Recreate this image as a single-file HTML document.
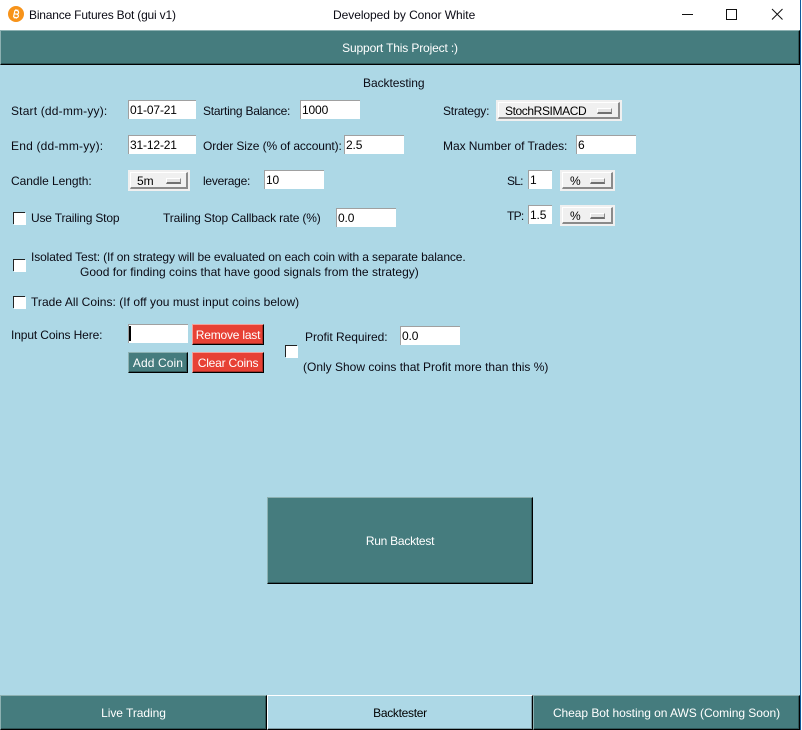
<!DOCTYPE html>
<html><head><meta charset="utf-8"><style>
html,body{margin:0;padding:0;background:#fff}
body{width:802px;height:730px;position:relative;overflow:hidden;font:12px/16px "Liberation Sans",sans-serif;color:#000}
div,svg{position:absolute}
.t{white-space:nowrap;height:16px;color:#0a0a14}
.b{background:#457c7e;box-sizing:border-box;border-style:solid;border-width:1px;border-color:#8db1b2 #000 #000 #8db1b2;box-shadow:inset -1px -1px 0 #2e5557;color:#fff;text-align:center;white-space:nowrap}
.e{background:#fff;box-sizing:border-box;border-style:solid;border-width:1px 0 0 1px;border-color:#a0a0a0;height:19px;padding-left:1px;line-height:18px;color:#000;white-space:nowrap;letter-spacing:-.15px}
.cb{width:12px;height:12px;box-sizing:border-box;background:#fff;border-style:solid;border-width:1px 0 0 1px;border-color:#222;box-shadow:1px 1px 0 #fff}
.m{background:#f0f0f0;height:21px;box-sizing:border-box;border:2px solid #f0f0f0}
.m i{position:absolute;left:0;top:0;right:0;bottom:0;border-style:solid;border-width:1px 2px 2px 1px;border-color:#fff #8a8a8a #8a8a8a #fff;box-sizing:border-box}
.m b{position:absolute;font-weight:normal;top:1px;line-height:17px;white-space:nowrap}
.m u{position:absolute;top:6px;width:15px;height:6px;box-sizing:border-box;border-style:solid;border-width:1px 1px 2px 1px;border-color:#fff #8a8a8a #707070 #fff;background:#e4e4e4}
.r{background:#e74135;box-sizing:border-box;border-style:solid;border-width:1px;border-color:#f4a09a #000 #000 #f4a09a;box-shadow:inset -1px -1px 0 #a82e26;color:#fff;text-align:center;white-space:nowrap;letter-spacing:-.2px}
</style></head><body>
<div style="left:0;top:0;width:800px;height:30px;background:#fff"></div>
<div style="left:800px;top:0;width:1px;height:730px;background:#0f5a9e"></div>
<div style="left:0;top:30px;width:800px;height:700px;background:#add8e6"></div>

<svg style="left:8px;top:6px" width="16" height="16" viewBox="0 0 16 16"><circle cx="8" cy="8" r="8" fill="#f7931a"/><g transform="rotate(12 8 8)"><path d="M6.200 4.500v7M6.200 4.500h2.300a1.700 1.700 0 0 1 0 3.500H6.200m0 0h2.800a1.750 1.750 0 0 1 0 3.500H6.200M7.200 3.300v1.200M9 3.300v1.200M7.200 11.500v1.200M9 11.500v1.200" fill="none" stroke="#fff" stroke-width="1.200"/></g></svg>
<div class="t" style="left:29px;top:7px;letter-spacing:-.19px">Binance Futures Bot (gui v1)</div>
<div class="t" style="left:333px;top:7px;letter-spacing:-.05px">Developed by Conor White</div>
<svg style="left:680px;top:6px" width="110" height="18" viewBox="0 0 110 18"><path d="M2 8.500H13" stroke="#111" fill="none"/><path d="M46.500 3.500h10v10h-10z" stroke="#111" fill="none"/><path d="M92 3l10.500 10.500M102.500 3L92 13.500" stroke="#111" fill="none"/></svg>

<div class="b" style="left:0;top:30px;width:800px;height:35px;line-height:34px;letter-spacing:-.15px">Support This Project :)</div>

<div class="t" style="left:363px;top:75px;letter-spacing:-.05px">Backtesting</div>

<div class="t" style="left:11px;top:103px;letter-spacing:.18px">Start (dd-mm-yy):</div>
<div class="e" style="left:128px;top:100px;width:68px">01-07-21</div>
<div class="t" style="left:203px;top:103px;letter-spacing:-.25px">Starting Balance:</div>
<div class="e" style="left:300px;top:100px;width:60px">1000</div>
<div class="t" style="left:443px;top:103px;letter-spacing:-.2px">Strategy:</div>
<div class="m" style="left:496px;top:100px;width:126px"><i></i><b style="left:7px;letter-spacing:-.4px">StochRSIMACD</b><u style="left:99px"></u></div>

<div class="t" style="left:11px;top:138px;letter-spacing:.2px">End (dd-mm-yy):</div>
<div class="e" style="left:128px;top:135px;width:68px">31-12-21</div>
<div class="t" style="left:203px;top:138px;letter-spacing:-.1px">Order Size (% of account):</div>
<div class="e" style="left:344px;top:135px;width:60px">2.5</div>
<div class="t" style="left:443px;top:138px;letter-spacing:-.05px">Max Number of Trades:</div>
<div class="e" style="left:576px;top:135px;width:60px">6</div>

<div class="t" style="left:11px;top:173px;letter-spacing:-.05px">Candle Length:</div>
<div class="m" style="left:128px;top:170px;width:62px"><i></i><b style="left:7px">5m</b><u style="left:36px"></u></div>
<div class="t" style="left:203px;top:173px;letter-spacing:-.25px">leverage:</div>
<div class="e" style="left:264px;top:170px;width:60px">10</div>
<div class="t" style="left:507px;top:173px;letter-spacing:-.8px">SL:</div>
<div class="e" style="left:528px;top:170px;width:24px">1</div>
<div class="m" style="left:560px;top:170px;width:55px"><i></i><b style="left:8px">%</b><u style="left:28px"></u></div>

<div class="cb" style="left:13px;top:212px"></div>
<div class="t" style="left:31px;top:210px;letter-spacing:-.18px">Use Trailing Stop</div>
<div class="t" style="left:163px;top:210px;letter-spacing:-.15px">Trailing Stop Callback rate (%)</div>
<div class="e" style="left:336px;top:208px;width:60px">0.0</div>
<div class="t" style="left:507px;top:208px;letter-spacing:-.7px">TP:</div>
<div class="e" style="left:528px;top:205px;width:24px">1.5</div>
<div class="m" style="left:560px;top:205px;width:55px"><i></i><b style="left:8px">%</b><u style="left:28px"></u></div>

<div class="cb" style="left:13px;top:259px"></div>
<div class="t" style="left:31px;top:249px;letter-spacing:-.11px">Isolated Test: (If on strategy will be evaluated on each coin with a separate balance.</div>
<div class="t" style="left:80px;top:264px;letter-spacing:.02px">Good for finding coins that have good signals from the strategy)</div>

<div class="cb" style="left:13px;top:296px"></div>
<div class="t" style="left:31px;top:294px;letter-spacing:.04px">Trade All Coins: (If off you must input coins below)</div>

<div class="t" style="left:11px;top:327px;letter-spacing:-.12px">Input Coins Here:</div>
<div class="e" style="left:128px;top:324px;width:60px"></div>
<div style="left:129px;top:326px;width:2px;height:15px;background:#000"></div>
<div class="r" style="left:192px;top:324px;width:72px;height:21px;line-height:21px">Remove last</div>
<div class="b" style="left:128px;top:352px;width:60px;height:21px;line-height:21px;letter-spacing:.1px">Add Coin</div>
<div class="r" style="left:192px;top:352px;width:72px;height:21px;line-height:21px">Clear Coins</div>

<div class="cb" style="left:285px;top:345px"></div>
<div class="t" style="left:305px;top:329px;letter-spacing:-.05px">Profit Required:</div>
<div class="e" style="left:400px;top:326px;width:60px">0.0</div>
<div class="t" style="left:303px;top:359px">(Only Show coins that Profit more than this %)</div>

<div class="b" style="left:267px;top:497px;width:266px;height:87px;line-height:86px;letter-spacing:-.25px">Run Backtest</div>

<div class="b" style="left:0;top:695px;width:267px;height:35px;line-height:34px;letter-spacing:-.05px">Live Trading</div>
<div style="left:267px;top:695px;width:266px;height:35px;box-sizing:border-box;background:#add8e6;border-style:solid;border-width:1px 1px 1px 1px;border-color:#fff #000 #000 #fff;box-shadow:inset -1px -1px 0 #7d9ca6;color:#000;text-align:center;line-height:34px;letter-spacing:-.3px">Backtester</div>
<div class="b" style="left:533px;top:695px;width:267px;height:35px;line-height:34px;letter-spacing:-.05px">Cheap Bot hosting on AWS (Coming Soon)</div>
</body></html>
